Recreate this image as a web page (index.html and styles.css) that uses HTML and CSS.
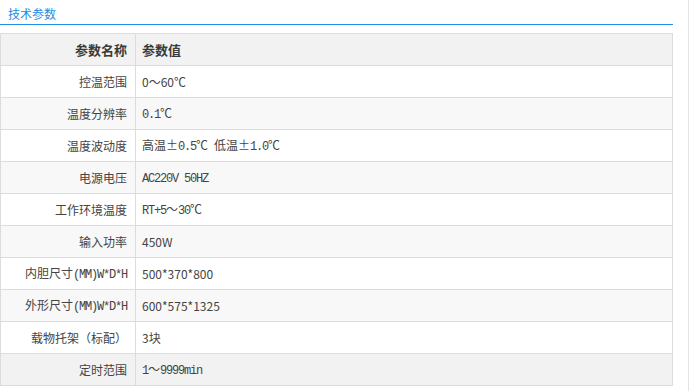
FILE: index.html
```html
<!DOCTYPE html>
<html lang="zh-CN">
<head>
<meta charset="utf-8">
<title>技术参数</title>
<link rel="stylesheet" href="styles.css">
</head>
<body>
<div class="page">
  <div class="panel">
    <div class="tab-head"><span class="tab-title">技术参数</span></div>
    <table class="spec">
      <colgroup><col class="c-name"><col class="c-val"></colgroup>
      <tr class="head"><th class="name">参数名称</th><th class="val">参数值</th></tr>
      <tr><td class="name">控温范围</td><td class="val">0～60℃</td></tr>
      <tr class="alt"><td class="name">温度分辨率</td><td class="val"><span class="ss">0.1</span>℃</td></tr>
      <tr><td class="name">温度波动度</td><td class="val">高温±<span class="ss">0.5</span>℃<span class="ss">&nbsp;</span>低温±<span class="ss">1.0</span>℃</td></tr>
      <tr class="alt"><td class="name">电源电压</td><td class="val"><span class="ss">AC220V 50HZ</span></td></tr>
      <tr><td class="name">工作环境温度</td><td class="val"><span class="ss">RT+5</span>～<span class="ss">30</span>℃</td></tr>
      <tr class="alt"><td class="name">输入功率</td><td class="val">450W</td></tr>
      <tr><td class="name">内胆尺寸<span class="ss">(MM)W*D*H</span></td><td class="val">500*370*800</td></tr>
      <tr class="alt"><td class="name">外形尺寸<span class="ss">(MM)W*D*H</span></td><td class="val">600*575*1325</td></tr>
      <tr><td class="name">载物托架（标配）</td><td class="val">3块</td></tr>
      <tr class="hl"><td class="name">定时范围</td><td class="val"><span class="ss">1</span>～<span class="ss">9999min</span></td></tr>
    </table>
  </div>
</div>
</body>
</html>
```
FILE: styles.css
```css
html, body {
  margin: 0;
  padding: 0;
  background: #fff;
}
body {
  font-family: "Noto Sans CJK SC", "Liberation Sans", sans-serif;
  font-size: 12px;
  color: #444;
}
.page {
  width: 688px;
  min-height: 100vh;
  border-right: 1px solid #e3e3e3;
}
.panel {
  width: 673px;
}
.tab-head {
  height: 25px;
  border-bottom: 1px solid #1e8ee6;
  box-sizing: border-box;
  padding-left: 8px;
  line-height: 27px;
}
.tab-title {
  color: #1a8de6;
  font-size: 12px;
}
.spec {
  margin-top: 8px;
  width: 673px;
  border-collapse: collapse;
  table-layout: fixed;
}
.c-name { width: 135px; }
.spec th, .spec td {
  border: 1px solid #dcdcdc;
  height: 31px;
  padding: 0;
  font-weight: normal;
  line-height: 16px;
}
.spec .name {
  text-align: right;
  padding-right: 8px;
}
.spec .val {
  text-align: left;
  padding-left: 6px;
}
.spec tr.head th {
  background: #f2f2f2;
  font-weight: bold;
  font-size: 13px;
  color: #3a3a3a;
}
.spec tr.alt td { background: #f8f8f8; }
.spec tr.hl td { background: #f2f2f2; }
.ss {
  font-family: "Liberation Mono", monospace;
  letter-spacing: -1.2px;
}
```
